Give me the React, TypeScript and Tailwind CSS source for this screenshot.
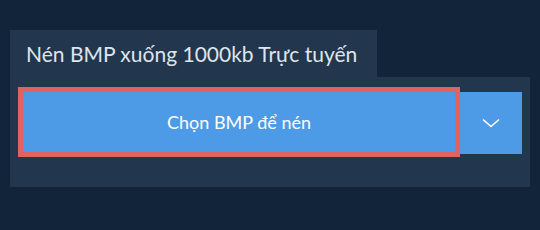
import React from "react";

export default function App() {
  return (
    <div
      className="w-[540px] h-[230px] bg-[#11243a] pt-[30px] pl-[10px]"
      style={{ fontFamily: "Lato, 'Noto Sans', sans-serif" }}
    >
      <div className="flex">
        <div className="h-[47px] w-[367px] bg-[#22374e] pl-[16px] flex items-center text-[21px] text-[#dfe5ec] leading-none">
          Nén BMP xuống 1000kb Trực tuyến
        </div>
      </div>
      <div className="w-[520px] h-[110px] bg-[#22374e] pt-[10px] pl-[8px] flex items-start">
        <button className="w-[442px] h-[70px] border-[5px] border-[#e06262] bg-[#4d9be6] text-white text-[18px] flex items-center justify-center leading-none">
          Chọn BMP để nén
        </button>
        <button className="mt-[5px] w-[62px] h-[62px] bg-[#4d9be6] flex items-center justify-center">
          <svg width="18" height="10" viewBox="0 0 18 10" fill="none">
            <path d="M1 1.5 L9 8.5 L17 1.5" stroke="white" strokeWidth="1.6" />
          </svg>
        </button>
      </div>
    </div>
  );
}
